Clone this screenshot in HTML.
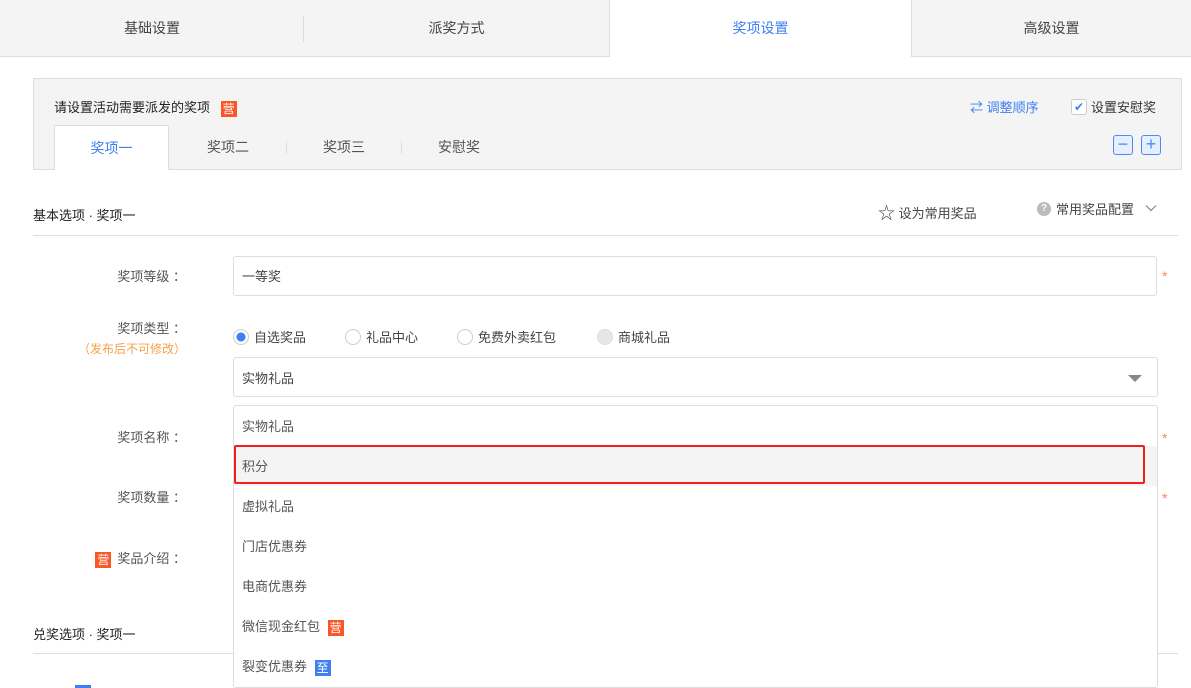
<!DOCTYPE html>
<html><head><meta charset="utf-8"><style>
*{box-sizing:border-box;margin:0;padding:0}
body{width:1191px;height:688px;overflow:hidden;background:#fff;font-family:"Liberation Sans","Noto Sans CJK SC",sans-serif;font-size:13px;color:#333;position:relative}
.a{position:absolute}
.tab{position:absolute;top:0;height:57px;line-height:57px;text-align:center;font-size:14px;color:#444;background:#f4f4f4;border-bottom:1px solid #ddd}
.sep{position:absolute;width:1px;background:#ddd}
.badge{display:inline-block;width:16px;height:16px;line-height:16px;text-align:center;color:#fff;font-size:12px;background:#fa5627;vertical-align:middle}
.lbl{position:absolute;width:186px;left:0;text-align:right;font-size:13px;color:#555}
.inp{position:absolute;border:1px solid #ddd;border-radius:3px;background:#fff}
.star{position:absolute;left:1162px;color:#f7845e;font-size:14px}
.opt{position:absolute;left:242px;font-size:13px;color:#555}
.radio{display:inline-block;width:16px;height:16px;border:1px solid #ccc;border-radius:50%;vertical-align:-3px;margin-right:5px;background:#fff}
</style></head><body>
<div class="tab" style="left:0;width:304px">基础设置</div>
<div class="tab" style="left:304px;width:305px">派奖方式</div>
<div class="sep" style="left:303px;top:16px;height:26px"></div>
<div class="tab" style="left:609px;width:303px;background:#fff;color:#3f7ff0;border-bottom:none;border-left:1px solid #ddd;border-right:1px solid #ddd">奖项设置</div>
<div class="tab" style="left:912px;width:279px">高级设置</div>

<div class="a" style="left:33px;top:78px;width:1149px;height:92px;background:#f4f4f4;border:1px solid #ddd"></div>
<div class="a" style="left:54px;top:97px;font-size:13px;color:#222">请设置活动需要派发的奖项 <span class="badge" style="margin-left:7px">营</span></div>
<div class="a" style="left:970px;top:97px;color:#3f7ff0;font-size:13px">⇄ 调整顺序</div>
<div class="a" style="left:1071px;top:99px;width:16px;height:16px;border:1px solid #ccc;border-radius:3px;background:#fff;color:#3f7ff0;font-size:12px;line-height:14px;text-align:center">✔</div>
<div class="a" style="left:1091px;top:97px;color:#333;font-size:13px">设置安慰奖</div>
<div class="a" style="left:1113px;top:135px;width:20px;height:20px;border:1px solid #4d8af0;border-radius:3px;background:#e6efff;color:#4d8af0;line-height:17px;text-align:center;font-size:18px">−</div>
<div class="a" style="left:1141px;top:135px;width:20px;height:20px;border:1px solid #4d8af0;border-radius:3px;background:#e6efff;color:#4d8af0;line-height:17px;text-align:center;font-size:18px">+</div>

<div class="a" style="left:54px;top:125px;width:115px;height:45px;background:#fff;border:1px solid #ddd;border-bottom:none;text-align:center;line-height:44px;color:#3f7ff0;font-size:14px">奖项一</div>
<div class="a" style="left:169px;top:125px;width:118px;line-height:44px;text-align:center;color:#555;font-size:14px">奖项二</div>
<div class="sep" style="left:286px;top:141px;height:13px"></div>
<div class="a" style="left:287px;top:125px;width:114px;line-height:44px;text-align:center;color:#555;font-size:14px">奖项三</div>
<div class="sep" style="left:401px;top:141px;height:13px"></div>
<div class="a" style="left:401px;top:125px;width:116px;line-height:44px;text-align:center;color:#555;font-size:14px">安慰奖</div>

<div class="a" style="left:33px;top:205px;font-size:13px;color:#222">基本选项 · 奖项一</div>
<div class="a" style="left:878px;top:199px;color:#444;font-size:13px"><span style="font-size:17px;vertical-align:-1px">☆</span> 设为常用奖品</div>
<div class="a" style="left:1037px;top:202px;width:14px;height:14px;border-radius:50%;background:#bbb;color:#fff;font-size:10px;text-align:center;line-height:14px;font-weight:bold">?</div>
<div class="a" style="left:1056px;top:199px;color:#444;font-size:13px">常用奖品配置</div>
<svg class="a" style="left:1145px;top:204px" width="12" height="8"><path d="M1 1.5l5 5 5-5" fill="none" stroke="#888" stroke-width="1.2"/></svg>
<div class="a" style="left:33px;top:235px;width:1145px;height:1px;background:#ddd"></div>

<div class="lbl" style="top:266px">奖项等级 ：</div>
<div class="inp" style="left:233px;top:256px;width:924px;height:40px"></div>
<div class="a" style="left:242px;top:266px;color:#444">一等奖</div>
<div class="star" style="top:268px">*</div>

<div class="lbl" style="top:318px">奖项类型 ：</div>
<div class="lbl" style="top:340px;font-size:12px;color:#f7a04a">（发布后不可修改）</div>
<div class="a" style="left:233px;top:327px;color:#444"><span class="radio" style="border-color:#ccc;background:radial-gradient(circle,#3f7ff0 4px,#fff 5px)"></span>自选奖品</div>
<div class="a" style="left:345px;top:327px;color:#444"><span class="radio"></span>礼品中心</div>
<div class="a" style="left:457px;top:327px;color:#444"><span class="radio"></span>免费外卖红包</div>
<div class="a" style="left:597px;top:327px;color:#444"><span class="radio" style="background:#e6e6e6;border-color:#ddd"></span>商城礼品</div>

<div class="inp" style="left:233px;top:357px;width:925px;height:40px"></div>
<div class="a" style="left:242px;top:368px;color:#444">实物礼品</div>
<div class="a" style="left:1128px;top:375px;width:0;height:0;border-left:7px solid transparent;border-right:7px solid transparent;border-top:7px solid #888"></div>

<div class="lbl" style="top:427px">奖项名称 ：</div>
<div class="star" style="top:430px">*</div>
<div class="lbl" style="top:487px">奖项数量 ：</div>
<div class="star" style="top:490px">*</div>
<div class="lbl" style="top:548px"><span class="badge" style="margin-right:6px">营</span>奖品介绍 ：</div>

<div class="a" style="left:33px;top:624px;font-size:13px;color:#222">兑奖选项 · 奖项一</div>
<div class="a" style="left:33px;top:653px;width:1145px;height:1px;background:#ddd"></div>
<div class="a" style="left:75px;top:685px;width:16px;height:3px;background:#3f7ff0"></div>

<div class="inp" style="left:233px;top:405px;width:925px;height:283px;border-radius:3px"></div>
<div class="a" style="left:234px;top:446px;width:923px;height:40px;background:#f4f4f4"></div>
<div class="a" style="left:234px;top:445px;width:911px;height:39px;border:2px solid #f0201a;border-radius:2px"></div>
<div class="opt" style="top:416px">实物礼品</div>
<div class="opt" style="top:456px">积分</div>
<div class="opt" style="top:496px">虚拟礼品</div>
<div class="opt" style="top:536px">门店优惠券</div>
<div class="opt" style="top:576px">电商优惠券</div>
<div class="opt" style="top:616px">微信现金红包 <span class="badge" style="margin-left:4px">营</span></div>
<div class="opt" style="top:656px">裂变优惠券 <span class="badge" style="margin-left:4px;background:#3f7ff0">至</span></div>
</body></html>
